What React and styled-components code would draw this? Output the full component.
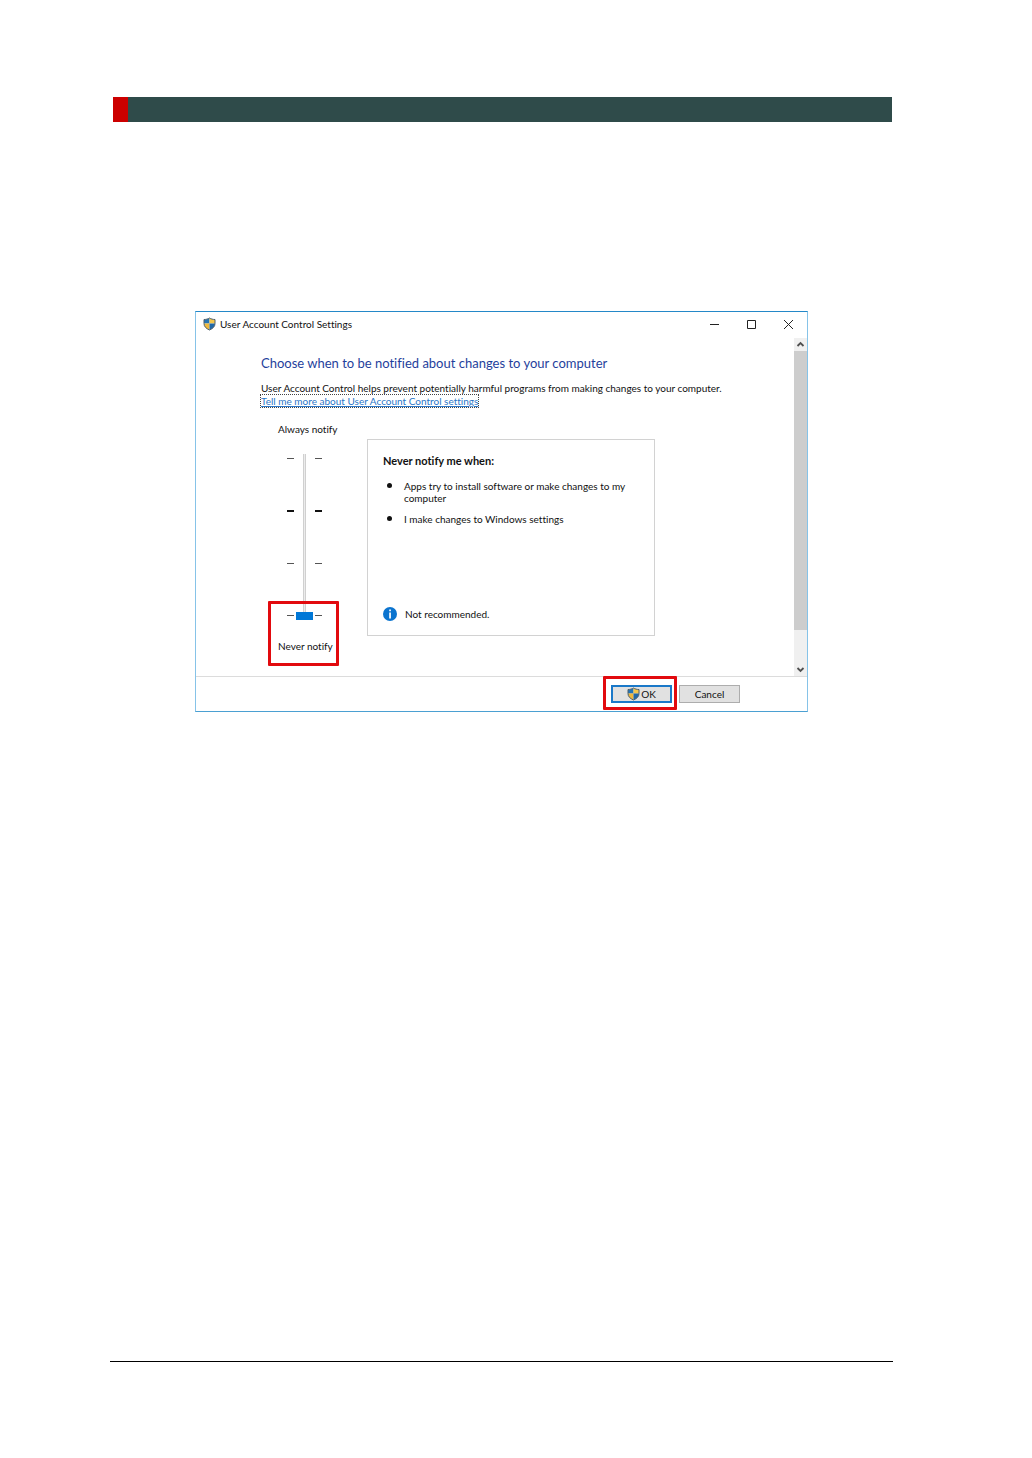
import React, { useState } from 'react';
import styled, { createGlobalStyle } from 'styled-components';

const GlobalStyle = createGlobalStyle`
  * {
    box-sizing: border-box;
  }
  body {
    margin: 0;
    background: #ffffff;
    color: #111111;
    font-family: Lato, 'Open Sans', sans-serif;
    font-size: 10px;
    line-height: 12px;
    font-variant-ligatures: none;
  }
  button {
    font: inherit;
    color: inherit;
  }
`

const Page = styled.div`
    display: flex;
    flex-direction: column;
    min-height: 100vh;
    padding: 97px 139px 96px 110px;
`

const PageHeader = styled.header`
    height: 25px;
    margin: 0 1px 0 3px;
    background: #2f4b4a;
    border-left: 15px solid #cc0000;
`

const PageFooter = styled.footer`
    margin-top: auto;
    border-top: 1px solid #000000;
`

const Window = styled.main`
    display: flex;
    flex-direction: column;
    margin: 189px 85px 0;
    border: 1px solid #86c3e8;
    border-top-color: #2488c8;
    border-bottom-color: #4ba0d2;
`

const TitleBar = styled.div`
    display: flex;
    align-items: center;
    height: 24px;
    margin-bottom: 2px;
    padding-left: 7px;
`

const WindowTitle = styled.h1`
    flex: 1;
    margin: 0 0 0 4px;
    font-size: 10px;
    font-weight: 400;
`

const CaptionButton = styled.button`
    display: flex;
    align-items: center;
    justify-content: center;
    width: 37px;
    height: 24px;
    padding: 0;
    border: 0;
    background: none;
    &:hover {
        background: #e5e5e5;
    }
`

const Body = styled.div`
    display: flex;
`

const Content = styled.div`
    flex: 1;
    min-width: 0;
    padding: 15px 24px 23px 65px;
`

const Heading = styled.h2`
    margin: 0 0 9px;
    font-size: 13px;
    line-height: 20px;
    font-weight: 400;
    color: #1f3f9c;
`

const Intro = styled.p`
    margin: 0 0 1px;
`

const HelpLink = styled.a`
    display: inline-block;
    color: #2a76c8;
    text-decoration: underline;
    outline: 1px dotted #444444;
`

const Settings = styled.div`
    display: flex;
    margin-top: 15px;
`

const Level = styled.div`
    width: 106px;
    flex-shrink: 0;
    padding-left: 17px;
    line-height: 14px;
`

const LevelLabel = styled.label`
    display: block;
`

const SliderRow = styled.div`
    display: flex;
    gap: 2px;
    height: 166px;
    margin: 18px 0 19px 9px;
`

const Ticks = styled.div`
    display: flex;
    flex-direction: column;
    justify-content: space-between;
    padding: 4px 0 3px;
`

const Tick = styled.span`
    width: 7px;
    height: 2px;
    border-top: ${props => props.$strong ? '2px solid #111111' : '1px solid #555555'};
`

const Slider = styled.input`
    appearance: none;
    writing-mode: vertical-lr;
    direction: rtl;
    width: 17px;
    height: 166px;
    margin: 0;
    background: none;
    &::-webkit-slider-runnable-track {
        width: 17px;
        background: linear-gradient(to right,
            transparent 7px, #d0d0d0 7px, #d0d0d0 8px,
            #ececec 8px, #ececec 9px, #d0d0d0 9px, #d0d0d0 10px, transparent 10px);
    }
    &::-webkit-slider-thumb {
        appearance: none;
        width: 17px;
        height: 8px;
        border: 0;
        border-radius: 0;
        background: #0078d7;
    }
`

const Marked = styled.div`
    position: relative;
`

// red highlight frame laid over the part of the dialog to look at
const Callout = styled.span`
    position: absolute;
    inset: ${props => props.$inset};
    border: 3px solid #e20a0e;
    border-radius: 1px;
    pointer-events: none;
`

const Panel = styled.section`
    display: flex;
    flex-direction: column;
    flex: 1;
    max-width: 288px;
    height: 197px;
    margin-top: 17px;
    padding: 14px 15px;
    border: 1px solid #d2d2d2;
`

const PanelTitle = styled.h3`
    margin: 0 0 12px;
    font-size: 11px;
    line-height: 14px;
    font-weight: 700;
`

const List = styled.ul`
    margin: 0;
    padding: 0 14px 0 21px;
    list-style: none;
`

const Item = styled.li`
    position: relative;
    margin-bottom: 9px;
    &::before {
        content: '';
        position: absolute;
        left: -17px;
        top: 3px;
        width: 5px;
        height: 5px;
        border-radius: 50%;
        background: #111111;
    }
`

const Advice = styled.div`
    display: flex;
    align-items: center;
    gap: 8px;
    margin-top: auto;
`

const ScrollBar = styled.div`
    display: flex;
    flex-direction: column;
    width: 13px;
    background: #f0f0f0;
`

const ScrollButton = styled.button`
    display: flex;
    align-items: center;
    justify-content: center;
    height: 13px;
    padding: 0;
    border: 0;
    background: none;
`

const ScrollThumb = styled.div`
    flex: 279;
    background: #cdcdcd;
`

const ScrollSpace = styled.div`
    flex: 33;
`

const Actions = styled.div`
    display: flex;
    justify-content: flex-end;
    gap: 7px;
    padding: 8px 67px 8px 0;
    border-top: 1px solid #dcdcdc;
`

const DialogButton = styled.button`
    display: flex;
    align-items: center;
    justify-content: center;
    gap: 1px;
    width: 61px;
    height: 18px;
    padding: 0;
    border: ${props => props.$primary ? '2px solid #1a78c8' : '1px solid #adadad'};
    background: #e1e1e1;
`

const ShieldIcon = () => (
    <svg width="13" height="14" viewBox="0 0 26 28" aria-hidden="true">
        <defs>
            <clipPath id="shield">
                <path d="M13 2C10 4 6 5 2 5v8c0 6 4 10 11 13 7-3 11-7 11-13V5c-4 0-8-1-11-3z" />
            </clipPath>
        </defs>
        <g clipPath="url(#shield)">
            <path d="M0 0h13v13H0z" fill="#2474b5" />
            <path d="M13 0h13v13H13z" fill="#f3c64b" />
            <path d="M0 13h13v15H0z" fill="#eeb83c" />
            <path d="M13 13h13v15H13z" fill="#2068a8" />
        </g>
        <path
            d="M13 2C10 4 6 5 2 5v8c0 6 4 10 11 13 7-3 11-7 11-13V5c-4 0-8-1-11-3z"
            fill="none"
            stroke="#4d5f6b"
            strokeWidth="2"
        />
    </svg>
)

const InfoIcon = () => (
    <svg width="14" height="14" viewBox="0 0 14 14" aria-hidden="true">
        <circle cx="7" cy="7" r="7" fill="#0b74cf" />
        <path d="M6.2 2.6h1.7v1.7H6.2zM6.2 5.4h1.7v6H6.2z" fill="#ffffff" />
    </svg>
)

const Chevron = ({ down }) => (
    <svg width="9" height="7" viewBox="0 0 9 7" aria-hidden="true">
        <path d={down ? 'M1.5 2l3 3 3-3' : 'M1.5 5l3-3 3 3'} fill="none" stroke="#505050" strokeWidth="1.8" />
    </svg>
)

const captionIcons = [
    { label: 'Minimize', d: 'M1 5.5h9' },
    { label: 'Maximize', d: 'M1.5 1.5h8v8h-8z' },
    { label: 'Close', d: 'M1 1l9 9M10 1l-9 9' }
]

const TickColumn = () => (
    <Ticks>
        {[3, 2, 1, 0].map(level => <Tick key={level} $strong={level === 2} />)}
    </Ticks>
)

const App = () => {
    const [level, setLevel] = useState(0)

    return (
        <>
            <GlobalStyle />
            <Page>
                <PageHeader />
                <Window>
                    <TitleBar>
                        <ShieldIcon />
                        <WindowTitle>User Account Control Settings</WindowTitle>
                        {captionIcons.map(icon => (
                            <CaptionButton key={icon.label} type="button" aria-label={icon.label}>
                                <svg width="11" height="11" viewBox="0 0 11 11" aria-hidden="true">
                                    <path d={icon.d} fill="none" stroke="#222222" />
                                </svg>
                            </CaptionButton>
                        ))}
                    </TitleBar>
                    <Body>
                        <Content>
                            <Heading>Choose when to be notified about changes to your computer</Heading>
                            <Intro>
                                User Account Control helps prevent potentially harmful programs from making changes to your computer.
                            </Intro>
                            <HelpLink href="#help">Tell me more about User Account Control settings</HelpLink>
                            <Settings>
                                <Level>
                                    <LevelLabel htmlFor="level">Always notify</LevelLabel>
                                    <Marked>
                                        <SliderRow>
                                            <TickColumn />
                                            <Slider
                                                id="level"
                                                type="range"
                                                min="0"
                                                max="3"
                                                value={level}
                                                onChange={(e) => setLevel(Number(e.target.value))}
                                            />
                                            <TickColumn />
                                        </SliderRow>
                                        <LevelLabel htmlFor="level">Never notify</LevelLabel>
                                        <Callout $inset="147px 28px -13px -10px" />
                                    </Marked>
                                </Level>
                                <Panel>
                                    <PanelTitle>Never notify me when:</PanelTitle>
                                    <List>
                                        <Item>Apps try to install software or make changes to my computer</Item>
                                        <Item>I make changes to Windows settings</Item>
                                    </List>
                                    <Advice>
                                        <InfoIcon />
                                        Not recommended.
                                    </Advice>
                                </Panel>
                            </Settings>
                        </Content>
                        <ScrollBar>
                            <ScrollButton type="button" aria-label="Scroll up"><Chevron /></ScrollButton>
                            <ScrollThumb />
                            <ScrollSpace />
                            <ScrollButton type="button" aria-label="Scroll down"><Chevron down /></ScrollButton>
                        </ScrollBar>
                    </Body>
                    <Actions>
                        <Marked>
                            <DialogButton type="button" $primary><ShieldIcon />OK</DialogButton>
                            <Callout $inset="-9px -5px -7px -8px" />
                        </Marked>
                        <DialogButton type="button">Cancel</DialogButton>
                    </Actions>
                </Window>
                <PageFooter />
            </Page>
        </>
    )
}

export default App;
